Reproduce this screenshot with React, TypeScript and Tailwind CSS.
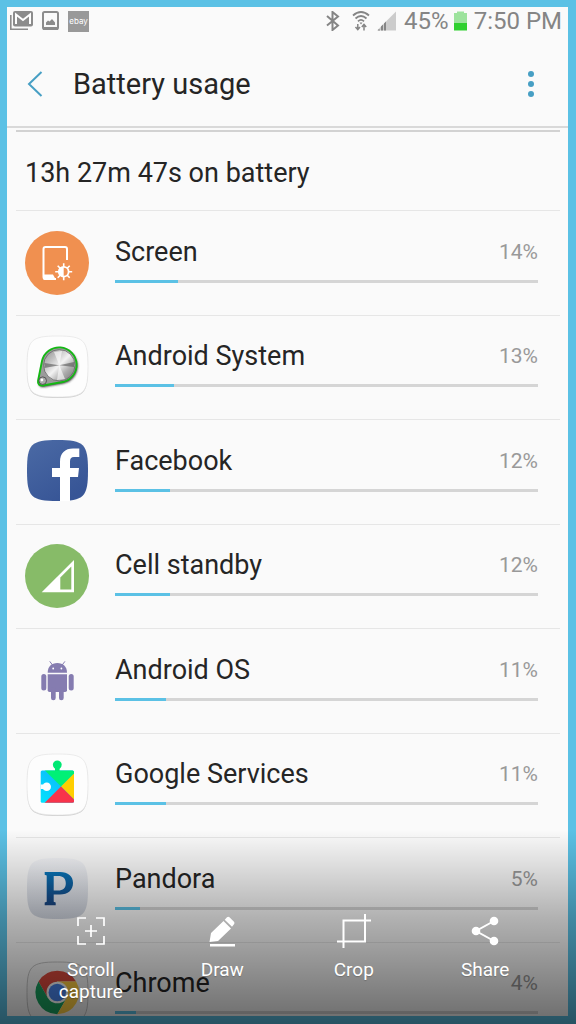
import type { ReactNode } from "react"

const SQUIRCLE = "M2 32.5C2 6 6 2 32.5 2S63 6 63 32.5 59 63 32.5 63 2 59 2 32.5Z"

function Icon({ children }: { children: ReactNode }) {
  return (
    <svg viewBox="0 0 64 64" className="size-16 shrink-0 overflow-visible" aria-hidden="true">
      {children}
    </svg>
  )
}

function Plate() {
  return (
    <>
      <path d={SQUIRCLE} fill="#cfcfcf" />
      <path d={SQUIRCLE} transform="translate(0 -1)" fill="#fdfdfd" stroke="#e4e4e4" strokeWidth="0.7" />
    </>
  )
}

function ScreenIcon() {
  return (
    <Icon>
      <circle cx="32" cy="32" r="32" fill="#f09050" />
      <path
        d="M42 29V18a2 2 0 0 0-2-2H20.500a2 2 0 0 0-2 2v28a2 2 0 0 0 2 2H31"
        fill="none"
        stroke="#fff"
        strokeWidth="2"
      />
      <path d="M18 43.500h10l3 5.500H20a2 2 0 0 1-2-2z" fill="#fff" />
      <g transform="translate(38.700 40.700)">
        <path
          d="M0-8.500V8.500M-8.500 0H8.500M-6-6L6 6M-6 6L6-6"
          stroke="#fff"
          strokeWidth="1.600"
        />
        <circle r="5.800" fill="#fff" />
        <path d="M0-4a4 4 0 0 1 0 8z" fill="#f09050" />
      </g>
    </Icon>
  )
}

function AndroidSystemIcon() {
  return (
    <Icon>
      <defs>
        <linearGradient id="metal" x1="0" y1="0" x2="1" y2="1">
          <stop offset="0" stopColor="#8a8a8a" />
          <stop offset="0.300" stopColor="#c4c4c4" />
          <stop offset="0.500" stopColor="#f2f2f2" />
          <stop offset="0.700" stopColor="#b0b0b0" />
          <stop offset="1" stopColor="#6d6d6d" />
        </linearGradient>
        <filter id="soft" x="-30%" y="-30%" width="160%" height="160%">
          <feGaussianBlur stdDeviation="1.300" />
        </filter>
      </defs>
      <Plate />
      <path
        d="M17 26A17.500 17.500 0 1 1 37.500 47L18 50.500C14.500 51 12.500 49 13 46z"
        transform="translate(1 1.500)"
        fill="#333"
        filter="url(#soft)"
      />
      <path
        d="M17 26A17.500 17.500 0 1 1 37.500 47L18 50.500C14.500 51 12.500 49 13 46z"
        fill="#9b9b9b"
        stroke="#14b814"
        strokeWidth="1.900"
      />
      <circle cx="34.300" cy="30.300" r="15.700" fill="url(#metal)" stroke="#666" strokeWidth="0.800" />
      <path d="M34.300 30.300L19.500 28v5zM34.300 30.300L49 27v5z" fill="#555" opacity="0.600" />
      <path d="M34.300 30.300L29 17l8-1zM34.300 30.300L32 45l8-1z" fill="#fff" opacity="0.600" />
      <circle cx="17.700" cy="45.700" r="3.800" fill="#aaa" stroke="#444" strokeWidth="0.800" />
      <circle cx="16.900" cy="45" r="1.400" fill="#fff" />
    </Icon>
  )
}

function FacebookIcon() {
  return (
    <Icon>
      <defs>
        <linearGradient id="fb" x1="0" y1="0" x2="0.600" y2="1">
          <stop offset="0" stopColor="#4b6aa5" />
          <stop offset="1" stopColor="#375596" />
        </linearGradient>
      </defs>
      <path d={SQUIRCLE} transform="translate(0 -2)" fill="url(#fb)" />
      <path
        d="M35 61V37h-8v-9h8v-6c0-9 5-13.500 13-13.500h6.300V17H49c-3 0-4 1.500-4 4.500V28h9l-1 9h-8v24z"
        fill="#fff"
      />
    </Icon>
  )
}

function CellIcon() {
  return (
    <Icon>
      <circle cx="32" cy="32" r="32" fill="#87bb68" />
      <path d="M16.700 48.300L49 16v32.300z" fill="#fff" />
      <path d="M35.300 33.500L46.300 22.500V45.500H35.300z" fill="#87bb68" />
    </Icon>
  )
}

function AndroidIcon() {
  return (
    <Icon>
      <g fill="#857cb0">
        <path d="M22.700 23.700C22.700 17.500 26.500 14 32.300 14S42 17.500 42 23.700z" />
        <path d="M22.700 25.300H42v16a1.800 1.800 0 0 1-1.800 1.800H24.500a1.800 1.800 0 0 1-1.800-1.800z" />
        <rect x="16.300" y="25" width="5" height="16.500" rx="2.500" />
        <rect x="43.700" y="25" width="5" height="16.500" rx="2.500" />
        <rect x="26" y="38" width="4.700" height="13.200" rx="2.300" />
        <rect x="34" y="38" width="4.700" height="13.200" rx="2.300" />
      </g>
      <path d="M27.500 16L25 12.700M37.200 16l2.500-3.300" stroke="#857cb0" strokeLinecap="round" />
      <circle cx="28.200" cy="19.500" r="0.900" fill="#fff" />
      <circle cx="36.400" cy="19.500" r="0.900" fill="#fff" />
    </Icon>
  )
}

function GoogleServicesIcon() {
  return (
    <Icon>
      <defs>
        <linearGradient id="gps-blue" x1="1" y1="0" x2="0" y2="1">
          <stop offset="0" stopColor="#12a9fb" />
          <stop offset="1" stopColor="#02e4fd" />
        </linearGradient>
        <clipPath id="gps-clip">
          <rect x="15.700" y="17.500" width="33.300" height="32.300" rx="1.500" />
        </clipPath>
      </defs>
      <Plate />
      <g clipPath="url(#gps-clip)">
        <rect x="15" y="17" width="35" height="33" fill="url(#gps-blue)" />
        <path d="M18.500 16L36 33.400 52 17.500V16z" fill="#00f076" />
        <path d="M50 19.500L36 33.400 50 47.500z" fill="#ffce00" />
        <path d="M19 50.500L36 33.400 53 50.500z" fill="#f8334a" />
        <path d="M15 31.500h3.500v4.500H15z" fill="#fdfdfd" />
        <circle cx="21.700" cy="33.700" r="4.300" fill="#fdfdfd" />
      </g>
      <circle cx="32.300" cy="11.800" r="4.400" fill="#00e873" />
      <path d="M30 14h4.600v4H30z" fill="#00e873" />
    </Icon>
  )
}

function PandoraIcon() {
  return (
    <Icon>
      <defs>
        <linearGradient id="pandora" x1="0" y1="0" x2="0" y2="1">
          <stop offset="0" stopColor="#0874b8" />
          <stop offset="1" stopColor="#1a4480" />
        </linearGradient>
        <linearGradient id="pandora-bg" x1="0" y1="0" x2="0" y2="1">
          <stop offset="0" stopColor="#f3f4f7" />
          <stop offset="1" stopColor="#cdd2dc" />
        </linearGradient>
      </defs>
      <path d={SQUIRCLE} transform="translate(0 -2)" fill="url(#pandora-bg)" />
      <path
        d="M19.700 14H35c8 0 13 4 13 11s-5 11.500-13 11.500h-6.300v7.300l2 .700v2.800h-11v-2.800l2-.700V17.500l-2-.700zM28.700 18v14.500H33c5 0 7.800-2.500 7.800-7.300S38 18 33 18z"
        fill="url(#pandora)"
        fillRule="evenodd"
      />
    </Icon>
  )
}

function ChromeIcon() {
  return (
    <Icon>
      <path d={SQUIRCLE} transform="translate(0 -2)" fill="#f4f4f4" fillOpacity="0.600" stroke="#c4c4c4" />
      <g transform="translate(32.300 30.500)">
        <path d="M-18.800-10.900A21.700 21.700 0 0 1 18.800-10.900L0-10.900 -9.400 5.400z" fill="#dd4b3e" />
        <path d="M-18.800-10.900A21.700 21.700 0 0 0 0 21.700L9.400 5.400 -9.400 5.400z" fill="#1aa260" />
        <path d="M18.800-10.900A21.700 21.700 0 0 1 0 21.700L9.400 5.400 0-10.900z" fill="#ffce42" />
        <circle r="10.800" fill="#fff" />
        <circle r="8.700" fill="#4a86ee" />
      </g>
    </Icon>
  )
}

const apps = [
  { name: "Screen", percent: 14, fill: 15, icon: <ScreenIcon /> },
  { name: "Android System", percent: 13, fill: 14, icon: <AndroidSystemIcon /> },
  { name: "Facebook", percent: 12, fill: 13, icon: <FacebookIcon /> },
  { name: "Cell standby", percent: 12, fill: 13, icon: <CellIcon /> },
  { name: "Android OS", percent: 11, fill: 12, icon: <AndroidIcon /> },
  { name: "Google Services", percent: 11, fill: 12, icon: <GoogleServicesIcon /> },
  { name: "Pandora", percent: 5, fill: 6, icon: <PandoraIcon /> },
  { name: "Chrome", percent: 4, fill: 5, icon: <ChromeIcon /> },
]

function StatusBar() {
  return (
    <div className="flex h-7 items-center justify-between pr-[6px] pl-[3px] text-[24px] leading-7 text-[#858585]">
      <div className="flex items-center gap-[9px]">
        <svg width="23" height="20" viewBox="0 0 23 20" aria-hidden="true">
          <path d="M.8 4v14.200H18" fill="none" stroke="#8c8c8c" strokeWidth="1.600" />
          <rect x="3" y="0" width="20" height="15.500" rx="2" fill="#8c8c8c" />
          <path d="M6 13V3.500l7 5.500 7-5.500V13" fill="none" stroke="#fff" strokeWidth="2" />
        </svg>
        <svg width="17" height="20" viewBox="0 0 17 20" aria-hidden="true">
          <rect x="1" y="1" width="15" height="17" rx="1.500" fill="none" stroke="#8c8c8c" strokeWidth="2" />
          <path d="M1 16h15v3H1z" fill="#8c8c8c" />
          <path d="M4 14V11.500L6 9.500l1.500 1L10 8l3 3.500V14z" fill="#8c8c8c" />
        </svg>
        <span className="flex size-[21px] items-center justify-center bg-[#999] font-[Inter,sans-serif] text-[8px] leading-none text-white">
          ebay
        </span>
      </div>
      <div className="flex items-center">
        <svg width="14" height="20" viewBox="0 0 14 20" className="mr-3" aria-hidden="true">
          <path d="M1 5l11 9.500-5.500 4.500V1L12 5.500 1 14.500" fill="none" stroke="#858585" strokeWidth="2" />
        </svg>
        <svg width="18" height="20" viewBox="0 0 18 20" className="mr-[7px]" aria-hidden="true">
          <path d="M1 4.500Q9-2.500 17 4.500M3.500 7.500Q9 2.500 14.500 7.500M6 10.300Q9 7.500 12 10.300" fill="none" stroke="#858585" strokeWidth="1.800" />
          <path d="M7.500 11.500h3L9 13.500z" fill="#858585" />
          <path d="M5.800 13v5.500M3.500 16l2.300 2.700L8 16M12 19.500V14M9.800 16l2.200-2.600 2.200 2.600" fill="none" stroke="#858585" strokeWidth="1.500" />
        </svg>
        <svg width="19" height="20" viewBox="0 0 19 20" className="mr-2" aria-hidden="true">
          <path d="M0 19.500L19 .500v19z" fill="#ccc" />
          <path d="M1 19.500v-1h2v1zM4 19.500v-4l2-2v6zM7 19.500v-7l2-2v9z" fill="#858585" />
        </svg>
        <span>45%</span>
        <svg width="13" height="20" viewBox="0 0 13 20" className="mr-[7px] ml-[5px]" aria-hidden="true">
          <path d="M3 2V.500h7V2h3v10H0V2z" fill="#9de39d" />
          <path d="M0 12h13v7.500H0z" fill="#2fd02f" />
        </svg>
        <span>7:50 PM</span>
      </div>
    </div>
  )
}

function Tools() {
  const style =
    "flex flex-1 cursor-pointer flex-col items-center gap-[10px] text-[19px] leading-[22px] text-white text-shadow-xs"
  return (
    <div className="absolute inset-x-0 bottom-0 flex h-[194px] items-start bg-linear-to-b from-transparent via-black/29 via-45% to-black/57 px-[25px] pt-[83px]">
      {/* scroll capture */}
      <button className={style}>
        <svg width="36" height="36" viewBox="0 0 36 36" fill="none" stroke="#fff" strokeWidth="1.700" aria-hidden="true">
          <path d="M5 13V5h8M23 5h8v8M31 23v8h-8M13 31H5v-8M18 12v12M12 18h12" />
        </svg>
        <span className="w-20">Scroll capture</span>
      </button>

      {/* draw */}
      <button className={style}>
        <svg width="36" height="36" viewBox="0 0 36 36" fill="#fff" aria-hidden="true">
          <path d="M6 31h25v2.500H6zM5.500 29l1.500-9L19.500 8l7.500 7.500L14 28zM20.700 6.800L23 4.300q1.200-1 2.500 0l4.500 4.500q1 1.200 0 2.500l-2 2.500z" />
        </svg>
        <span>Draw</span>
      </button>

      {/* crop */}
      <button className={style}>
        <svg width="36" height="36" viewBox="0 0 36 36" fill="none" stroke="#fff" strokeWidth="2" aria-hidden="true">
          <path d="M7.500 35V7.500H35M1 28.500h28V1" />
        </svg>
        <span>Crop</span>
      </button>

      {/* share */}
      <button className={style}>
        <svg width="36" height="36" viewBox="0 0 36 36" fill="#fff" aria-hidden="true">
          <path d="M27 8L9 18l18 10" fill="none" stroke="#fff" strokeWidth="2" />
          <circle cx="27" cy="8" r="4.300" />
          <circle cx="9" cy="18" r="4.300" />
          <circle cx="27" cy="28" r="4.300" />
        </svg>
        <span>Share</span>
      </button>
    </div>
  )
}

export default function App() {
  return (
    <div className="relative h-screen overflow-hidden bg-[#5bc1e5] pt-[7px] pr-2 pb-2 pl-[7px] font-[Roboto,sans-serif] text-[#252525]">
      <div className="h-full overflow-hidden bg-[#fafafa]">
        <StatusBar />

        <header className="flex h-[93px] items-center border-b-2 border-[#d9d9d9] px-5 pt-[6px]">
          <button aria-label="Back" className="flex w-[46px] cursor-pointer">
            <svg width="16" height="26" viewBox="0 0 16 26" fill="none" stroke="#479fc4" strokeWidth="2" aria-hidden="true">
              <path d="M14.500 1L2 13l12.500 12" />
            </svg>
          </button>
          <h1 className="flex-1 text-[29px] leading-9">Battery usage</h1>
          <button aria-label="More options" className="flex w-[34px] cursor-pointer justify-center">
            <svg width="6" height="26" viewBox="0 0 6 26" fill="#479fc4" aria-hidden="true">
              <circle cx="3" cy="3" r="3" />
              <circle cx="3" cy="13" r="3" />
              <circle cx="3" cy="23" r="3" />
            </svg>
          </button>
        </header>

        <main className="mr-2 ml-[9px] mt-[2px] border-t-2 border-[#d2d2d2]">
          <p className="flex h-[79px] items-center border-b border-[#e6e6e6] px-[9px] pt-[3px] text-[27px] leading-9">
            13h 27m 47s on battery
          </p>
          <ul>
            {apps.map((app) => (
              <li
                key={app.name}
                className="flex items-start gap-[26px] border-b border-[#e6e6e6] py-5 pr-[22px] pl-[9px] even:pt-[19px]"
              >
                {app.icon}
                <div className="flex-1">
                  <div className="flex h-[49px] items-center justify-between pb-[6px]">
                    <span className="text-[27px]">{app.name}</span>
                    <span className="text-[21px] text-[#999]">{app.percent}%</span>
                  </div>
                  <div
                    role="progressbar"
                    aria-label={app.name}
                    aria-valuenow={app.percent}
                    className="h-[3px] bg-[#d5d5d5]"
                  >
                    <div className="h-full bg-[#5bc1e5]" style={{ width: `${app.fill}%` }} />
                  </div>
                </div>
              </li>
            ))}
          </ul>
        </main>
      </div>
      <Tools />
    </div>
  )
}
